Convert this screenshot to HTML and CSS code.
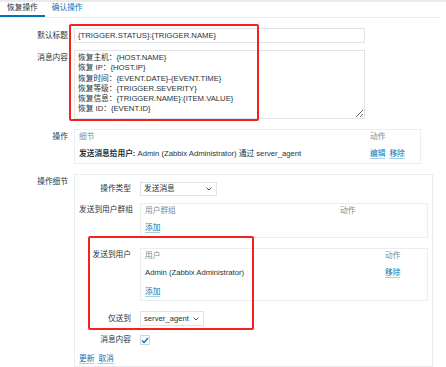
FILE: index.html
```html
<!DOCTYPE html>
<html lang="zh">
  <head>
    <meta charset="UTF-8" />
    <title>恢复操作</title>
    <link rel="stylesheet" href="styles.css">
  </head>
  <body>
    <div class="topline"></div>
    <div class="tabs">
      <span class="tab active">恢复操作</span>
      <span class="tab">确认操作</span>
    </div>

    <div class="form">
      <div class="row row-center">
        <div class="lbl">默认标题</div>
        <div class="input">{TRIGGER.STATUS}:{TRIGGER.NAME}</div>
      </div>

      <div class="row">
        <div class="lbl">消息内容</div>
        <textarea class="textarea">恢复主机：{HOST.NAME}
恢复 IP：{HOST.IP}
恢复时间：{EVENT.DATE}-{EVENT.TIME}
恢复等级：{TRIGGER.SEVERITY}
恢复信息：{TRIGGER.NAME}:{ITEM.VALUE}
恢复 ID：{EVENT.ID}</textarea>
      </div>

      <div class="row gap-big">
        <div class="lbl">操作</div>
        <div class="box ops">
          <div class="th">细节</div>
          <div class="th">动作</div>
          <div><b>发送消息给用户:</b> Admin (Zabbix Administrator) 通过 server_agent</div>
          <div class="links"><a href="#">编辑</a><a href="#">移除</a></div>
        </div>
      </div>

      <div class="row gap-big">
        <div class="lbl">操作细节</div>
        <div class="box details">
          <div class="drow drow-center">
            <div class="dlbl">操作类型</div>
            <div class="select select-type">
              <span>发送消息</span>
              <svg width="6" height="4" viewBox="0 0 6 4"><path d="M0.5 0.5 L3 3 L5.5 0.5" fill="none" stroke="#555" stroke-width="1"/></svg>
            </div>
          </div>

          <div class="drow">
            <div class="dlbl">发送到用户群组</div>
            <div class="box subbox groups">
              <div class="th">用户群组</div>
              <div class="th">动作</div>
              <div class="add"><a href="#">添加</a></div>
            </div>
          </div>

          <div class="drow gap-more">
            <div class="dlbl">发送到用户</div>
            <div class="box subbox users">
              <div class="th">用户</div>
              <div class="th">动作</div>
              <div>Admin (Zabbix Administrator)</div>
              <div><a href="#">移除</a></div>
              <div class="add"><a href="#">添加</a></div>
            </div>
          </div>

          <div class="drow drow-center gap-more">
            <div class="dlbl">仅送到</div>
            <div class="select select-media">
              <span>server_agent</span>
              <svg width="6" height="4" viewBox="0 0 6 4"><path d="M0.5 0.5 L3 3 L5.5 0.5" fill="none" stroke="#555" stroke-width="1"/></svg>
            </div>
          </div>

          <div class="drow drow-center gap-check">
            <div class="dlbl">消息内容</div>
            <span class="checkbox">
              <svg width="8" height="7" viewBox="0 0 8 7"><path d="M1 3.5 L3 5.5 L7 1" fill="none" stroke="#0275b8" stroke-width="1.4"/></svg>
            </span>
          </div>

          <div class="buttons links"><a href="#">更新</a><a href="#">取消</a></div>
        </div>
      </div>
    </div>

    <!-- annotation boxes -->
    <div class="mark mark-title"></div>
    <div class="mark mark-users"></div>
  </body>
</html>
```

FILE: styles.css
```css
* {
  margin: 0;
  padding: 0;
  box-sizing: border-box;
}

body {
  font-family: "Liberation Sans", "Noto Sans CJK SC", sans-serif;
  font-size: 7.7px;
  line-height: 10px;
  color: #26333a;
  background: #fff;
  width: 446px;
  height: 367px;
  overflow: hidden;
  position: relative;
}

a {
  color: #0275b8;
  text-decoration: none;
  border-bottom: 1px solid rgba(2, 117, 184, 0.35);
}

b {
  font-weight: bold;
}

.topline {
  height: 2px;
  background: #e8ebed;
}

.tabs {
  display: flex;
  border-bottom: 1px solid #ebeef0;
  width: 440px;
}

.tab {
  height: 15px;
  padding: 1px 7px 0;
  color: #0275b8;
}

.tab.active {
  color: #26333a;
  border-bottom: 2px solid #0275b8;
}

.form {
  padding-top: 10px;
  display: flex;
  flex-direction: column;
  gap: 7px;
}

.row {
  display: flex;
  align-items: flex-start;
  gap: 6px;
}

.row.gap-big {
  margin-top: 3px;
}

.row-center {
  align-items: center;
}

.lbl {
  width: 68px;
  text-align: right;
  padding-top: 3px;
  flex-shrink: 0;
}

.row-center .lbl {
  padding-top: 0;
}

.input {
  width: 291px;
  height: 15px;
  border: 1px solid #dfe4e7;
  padding: 1px 3px;
  line-height: 12px;
}

.textarea {
  width: 291px;
  height: 69px;
  border: 1px solid #dfe4e7;
  padding: 2px 3px;
  font: inherit;
  line-height: 10.3px;
  color: #26333a;
  resize: vertical;
  overflow: hidden;
}

.box {
  border: 1px solid #ebeef0;
}

.th {
  color: #768d99;
}

.ops {
  width: 347px;
  height: 35px;
  padding: 2px 4px;
  display: grid;
  grid-template-columns: 291px 1fr;
  row-gap: 5px;
}

.links a + a {
  margin-left: 4px;
}

.details {
  width: 359px;
  height: 193px;
  padding: 7px 4px;
  display: flex;
  flex-direction: column;
  gap: 7px;
}

.drow {
  display: flex;
  align-items: flex-start;
  gap: 9px;
}

.drow-center {
  align-items: center;
}

.drow.gap-more {
  margin-top: 3px;
}

.drow.gap-check {
  margin-top: 2px;
}

.dlbl {
  width: 52px;
  text-align: right;
  flex-shrink: 0;
  padding-top: 2px;
  white-space: nowrap;
}

.drow-center .dlbl {
  padding-top: 0;
}

.select {
  height: 14px;
  border: 1px solid #dfe4e7;
  padding: 0 4px 0 3px;
  display: flex;
  align-items: center;
  justify-content: space-between;
  gap: 4px;
}

.select-type {
  width: 77px;
}

.select-media {
  width: 64px;
  height: 15px;
}

.subbox {
  width: 291px;
  padding: 2px 4px;
  display: grid;
}

.groups {
  height: 35px;
  grid-template-columns: 195px 1fr;
  row-gap: 5px;
}

.users {
  height: 53px;
  grid-template-columns: 240px 1fr;
  row-gap: 6px;
}

.users .add {
  margin-top: 2px;
}

.checkbox {
  width: 10px;
  height: 10px;
  border: 1px solid #cfd6da;
  display: flex;
  align-items: center;
  justify-content: center;
}

.buttons {
  margin-top: 2px;
}

.mark {
  position: absolute;
  border: 2px solid #f4211d;
  border-radius: 2px;
}

.mark-title {
  left: 69px;
  top: 24px;
  width: 190px;
  height: 97px;
}

.mark-users {
  left: 88px;
  top: 236px;
  width: 166px;
  height: 94px;
}
```
